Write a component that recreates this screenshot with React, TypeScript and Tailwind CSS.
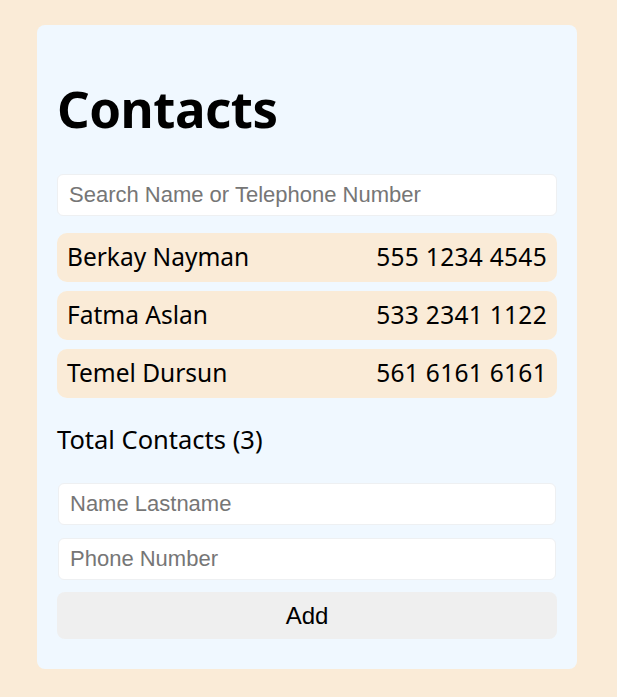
import React, { useState } from 'react';

type Contact = { name: string; phone: string };

const initialContacts: Contact[] = [
  { name: 'Berkay Nayman', phone: '555 1234 4545' },
  { name: 'Fatma Aslan', phone: '533 2341 1122' },
  { name: 'Temel Dursun', phone: '561 6161 6161' }
];

const uiFont = { fontFamily: '"Noto Sans", "DejaVu Sans", sans-serif' };
const formFont = { fontFamily: '"Liberation Sans", Arial, sans-serif' };

export default function App() {
  const [contacts, setContacts] = useState<Contact[]>(initialContacts);
  const [filter, setFilter] = useState('');
  const [name, setName] = useState('');
  const [phone, setPhone] = useState('');

  const shown = contacts.filter(
    (c) =>
      c.name.toLowerCase().includes(filter.toLowerCase()) ||
      c.phone.replace(/\s/g, '').includes(filter.replace(/\s/g, ''))
  );

  const add = () => {
    if (!name || !phone) return;
    setContacts([...contacts, { name, phone }]);
    setName('');
    setPhone('');
  };

  return (
    <div className="min-h-[697px] bg-[#faebd7] pt-[25px] pb-[29px]" style={uiFont}>
      <div className="ml-[37px] w-[540px] rounded-lg bg-[#f0f8ff] px-5 pt-[58px] pb-[30px] text-black">
        {/* Header */}
        <h1 className="text-[51px] font-bold leading-[50px] tracking-[-0.5px] mb-[41px]">Contacts</h1>

        {/* Search */}
        <input
          value={filter}
          onChange={(e) => setFilter(e.target.value)}
          placeholder="Search Name or Telephone Number"
          className="block w-full h-[42px] rounded-md border border-[#eef0f2] bg-white px-[11px] text-[22px] placeholder:text-[#767676] outline-none"
          style={formFont}
        />

        {/* List */}
        <ul className="mt-[17px] flex flex-col gap-[9px]">
          {shown.map((c) => (
            <li
              key={c.name}
              className="flex h-[49px] items-center justify-between rounded-[10px] bg-[#faebd7] px-[10px] text-[24.5px]"
            >
              <span>{c.name}</span>
              <span className="tracking-[0.3px]">{c.phone}</span>
            </li>
          ))}
        </ul>

        <p className="mt-[24px] text-[25.5px] leading-[34px]">Total Contacts ({shown.length})</p>

        {/* Form */}
        <div className="mt-[27px] flex flex-col" style={formFont}>
          <input
            value={name}
            onChange={(e) => setName(e.target.value)}
            placeholder="Name Lastname"
            className="mx-px block h-[42px] rounded-md border border-[#eef0f2] bg-white px-[11px] text-[22px] placeholder:text-[#767676] outline-none"
          />
          <input
            value={phone}
            onChange={(e) => setPhone(e.target.value)}
            placeholder="Phone Number"
            className="mx-px mt-[13px] block h-[42px] rounded-md border border-[#eef0f2] bg-white px-[11px] text-[22px] placeholder:text-[#767676] outline-none"
          />
          <button
            onClick={add}
            className="mt-[12px] h-[47px] w-full rounded-lg bg-[#efefef] text-[24px] text-black"
          >
            Add
          </button>
        </div>
      </div>
    </div>
  );
}
